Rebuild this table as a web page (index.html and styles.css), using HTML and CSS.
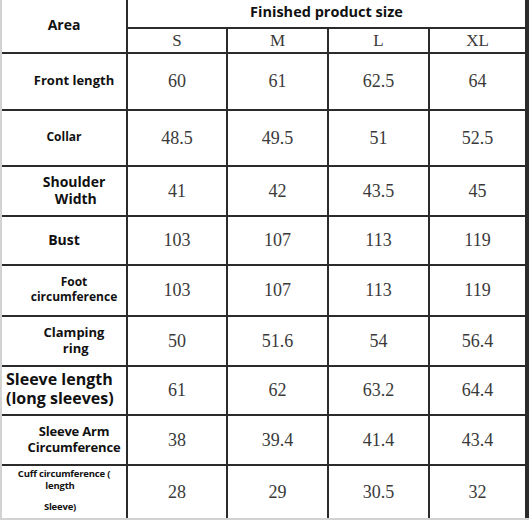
FILE: index.html
```html
<!DOCTYPE html>
<html>
<head>
<meta charset="utf-8">
<link rel="stylesheet" href="styles.css">
</head>
<body>
<div class="sheet">
  <div class="cell lbl area">Area</div>
  <div class="cell head">Finished product size</div>
  <div class="cell size">S</div>
  <div class="cell size">M</div>
  <div class="cell size">L</div>
  <div class="cell size">XL</div>

  <div class="cell lbl shift f13">Front length</div>
  <div class="cell num">60</div><div class="cell num">61</div><div class="cell num">62.5</div><div class="cell num">64</div>

  <div class="cell lbl f12">Collar</div>
  <div class="cell num">48.5</div><div class="cell num">49.5</div><div class="cell num">51</div><div class="cell num">52.5</div>

  <div class="cell lbl shift f14 lh17"><span>Shoulder</span><span>&nbsp;Width</span></div>
  <div class="cell num">41</div><div class="cell num">42</div><div class="cell num">43.5</div><div class="cell num">45</div>

  <div class="cell lbl f14">Bust</div>
  <div class="cell num">103</div><div class="cell num">107</div><div class="cell num">113</div><div class="cell num">119</div>

  <div class="cell lbl shift f12 lh15"><span>Foot</span><span>circumference</span></div>
  <div class="cell num">103</div><div class="cell num">107</div><div class="cell num">113</div><div class="cell num">119</div>

  <div class="cell lbl shift f13 lh16"><span>Clamping</span><span>&nbsp;ring</span></div>
  <div class="cell num">50</div><div class="cell num">51.6</div><div class="cell num">54</div><div class="cell num">56.4</div>

  <div class="cell lbl left f16 lh19"><span>Sleeve length</span><span>(long sleeves)</span></div>
  <div class="cell num">61</div><div class="cell num">62</div><div class="cell num">63.2</div><div class="cell num">64.4</div>

  <div class="cell lbl shift f13 lh16 tight"><span>Sleeve Arm</span><span>Circumference</span></div>
  <div class="cell num">38</div><div class="cell num">39.4</div><div class="cell num">41.4</div><div class="cell num">43.4</div>

  <div class="cell lbl cuff"><span>Cuff circumference (</span><span class="mid">length</span><span class="last">Sleeve)</span></div>
  <div class="cell num">28</div><div class="cell num">29</div><div class="cell num">30.5</div><div class="cell num">32</div>
</div>
</body>
</html>
```
FILE: styles.css
```css
html, body {
  margin: 0;
  padding: 0;
  background: #ffffff;
}

.sheet {
  display: grid;
  grid-template-columns: 124px 98px 99px 99px 95px;
  grid-template-rows: 27px 23px 55px 54px 48px 47px 49px 48px 47px 48px 52px;
  gap: 2px;
  width: 525px;
  background: #2b2b2b;
  border-left: 2px solid #d2d2d2;
  border-bottom: 2px solid #d2d2d2;
  padding-right: 2px;
  box-sizing: content-box;
}

.cell {
  background: #ffffff;
  display: flex;
  align-items: center;
  justify-content: center;
}

.lbl {
  flex-direction: column;
  font-family: "Open Sans", "Liberation Sans", sans-serif;
  font-weight: 700;
  color: #111111;
  text-align: center;
  white-space: pre;
  padding-bottom: 3px;
  box-sizing: border-box;
}

.area {
  grid-row: 1 / span 2;
  font-size: 14px;
}

.head {
  grid-column: 2 / span 4;
  font-family: "Open Sans", "Liberation Sans", sans-serif;
  font-weight: 700;
  font-size: 14.5px;
  color: #111111;
  padding-bottom: 4px;
  box-sizing: border-box;
}

.size, .num {
  font-family: "Liberation Serif", serif;
  color: #3a3a3a;
  font-size: 18px;
}

.size { font-size: 17px; }

.shift { padding-left: 20px; }

.left {
  align-items: flex-start;
  padding-left: 4px;
}

.f12 { font-size: 12px; }
.f13 { font-size: 13px; }
.f14 { font-size: 14px; }
.f16 { font-size: 16px; }
.lh15 { line-height: 15px; }
.lh16 { line-height: 16px; }
.lh17 { line-height: 17px; }
.lh19 { line-height: 19px; }
.tight { letter-spacing: -0.2px; }

.cuff {
  font-size: 9.5px;
  line-height: 12px;
  letter-spacing: -0.2px;
  padding-bottom: 3px;
}
.cuff .mid, .cuff .last { margin-right: 8px; }
.cuff .last { margin-top: 9px; }
```
